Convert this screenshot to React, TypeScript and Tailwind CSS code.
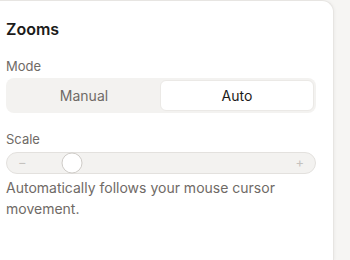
import React, { useState } from "react";

type Mode = "manual" | "auto";

const ZoomsPanel: React.FC = () => {
  const [mode, setMode] = useState<Mode>("auto");
  const [scale] = useState(21);

  return (
    <div className="flex h-full w-[334px] flex-col rounded-tr-xl border-t border-r border-[#e7e5e2] bg-white px-[6px] pt-[18px] shadow-[1px_0_3px_rgba(0,0,0,0.04)]">
      <h2 className="text-[16px] leading-5 font-semibold text-[#1c1b1a]">
        Zooms
      </h2>

      <span className="mt-[19px] text-[13px] leading-4 text-[#6f6a66]">
        Mode
      </span>
      <div className="mt-[4px] flex h-[35px] w-[310px] items-center rounded-lg bg-[#f3f2f0] p-[2px]">
        <button
          className={
            mode === "manual"
              ? "h-full flex-1 rounded-md border border-[#ebe9e6] bg-white text-[14px] text-[#1c1b1a]"
              : "h-full flex-1 rounded-md text-[14px] text-[#6f6a66]"
          }
          onClick={() => setMode("manual")}
        >
          Manual
        </button>
        <button
          className={
            mode === "auto"
              ? "h-full flex-1 rounded-md border border-[#ebe9e6] bg-white text-[14px] text-[#1c1b1a]"
              : "h-full flex-1 rounded-md text-[14px] text-[#6f6a66]"
          }
          onClick={() => setMode("auto")}
        >
          Auto
        </button>
      </div>

      <span className="mt-[18px] text-[13px] leading-4 text-[#6f6a66]">
        Scale
      </span>
      <div className="relative mt-[5px] flex h-[22px] w-[310px] items-center justify-between rounded-full border border-[#e3e1de] bg-[#f3f2f0] px-[11px] text-[13px] text-[#c5c2be]">
        <span>−</span>
        <span>+</span>
        {/* thumb */}
        <div
          className="absolute top-1/2 h-[21px] w-[21px] -translate-x-1/2 -translate-y-1/2 rounded-full border border-[#cfccc8] bg-white"
          style={{ left: `${scale}%` }}
        />
      </div>

      <p className="mt-[3px] text-[14px] leading-[21px] text-[#6f6a66]">
        Automatically follows your mouse cursor movement.
      </p>
    </div>
  );
};

export default function App() {
  return (
    <div
      className="flex h-[260px] w-[350px] overflow-hidden bg-[#f6f5f3]"
      style={{ fontFamily: "Inter, 'Noto Sans', sans-serif" }}
    >
      <ZoomsPanel />
    </div>
  );
}
